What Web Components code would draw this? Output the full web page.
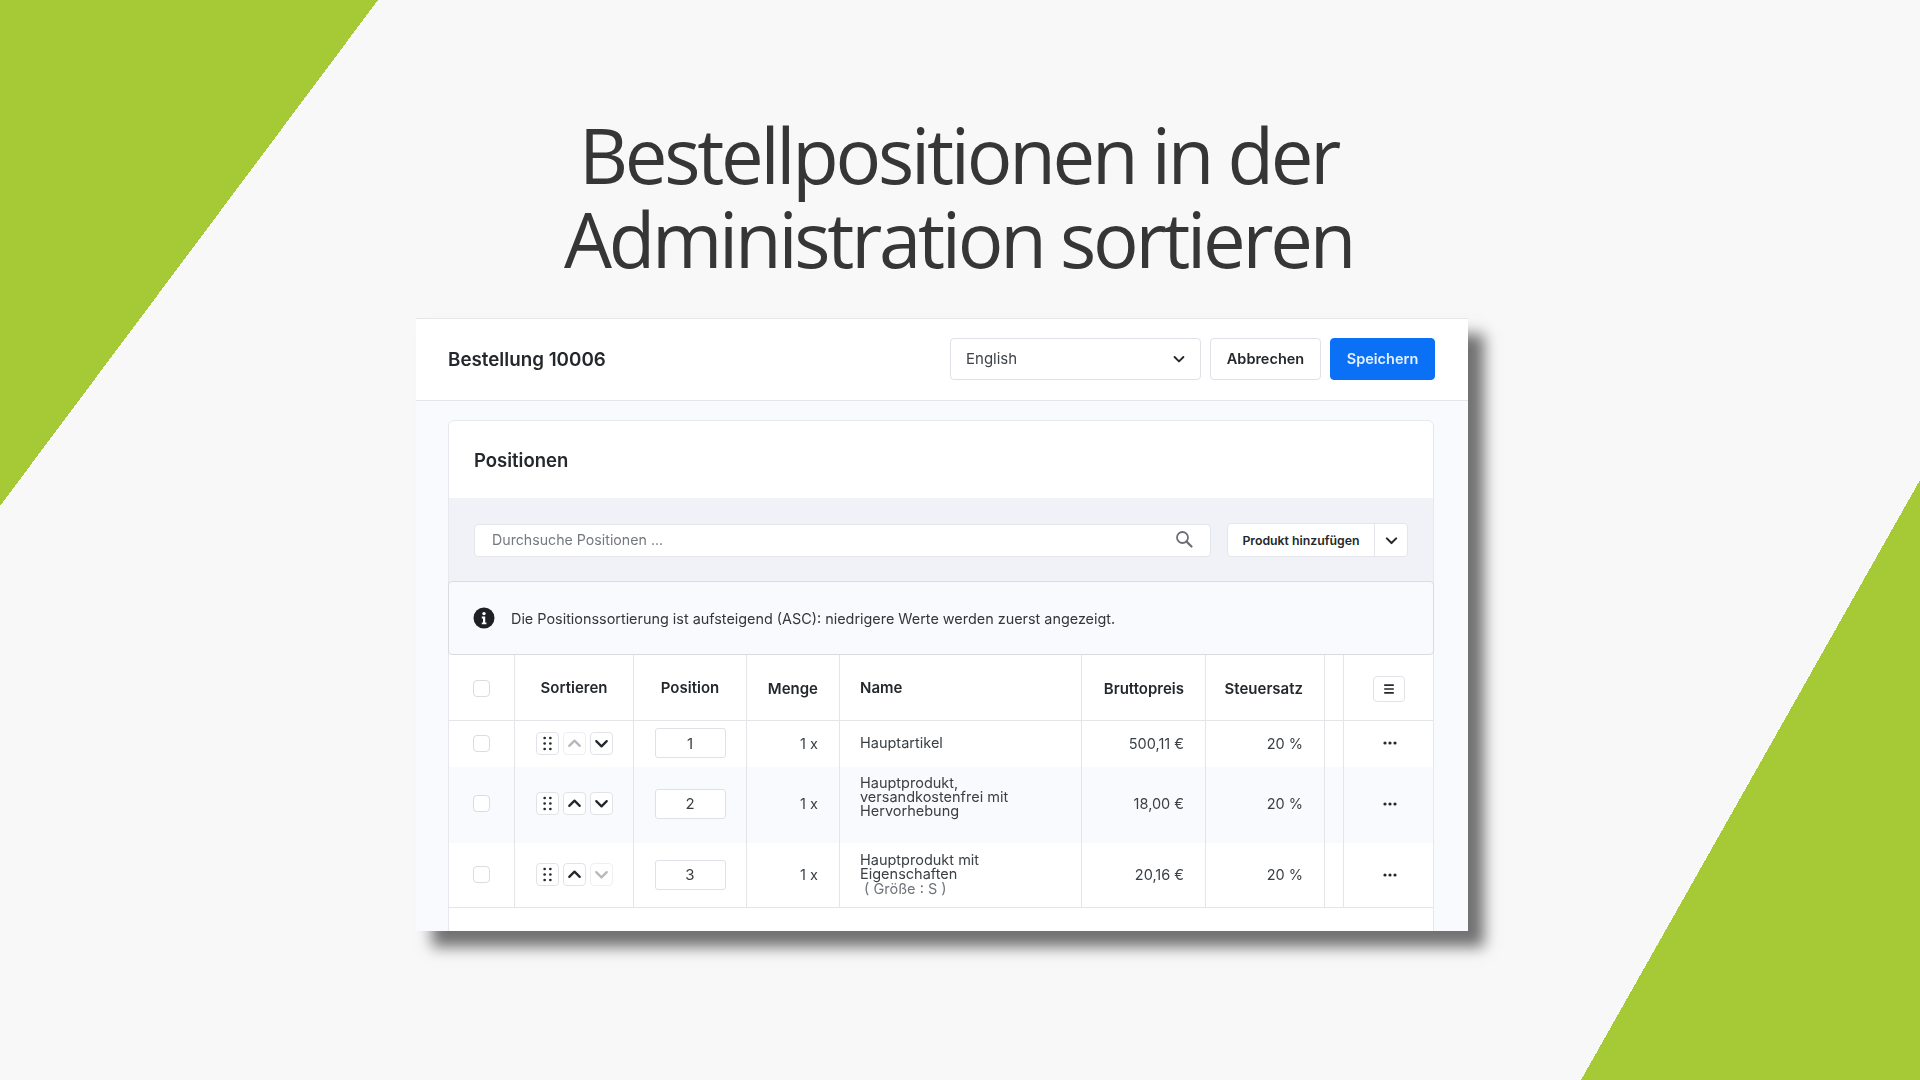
<!DOCTYPE html>
<html lang="de">
<head>
<meta charset="utf-8">
<title>Bestellpositionen sortieren</title>
<style>
  html, body { margin: 0; padding: 0; }
  body { font-family: Inter, "Liberation Sans", sans-serif; color: #2b3136; }
  line-row small { font-size: 14.5px; color: #6f747a; }
</style>
</head>
<body>
<x-slide>
  <span slot="title">Bestellpositionen in der<br>Administration sortieren</span>
  <order-panel order="Bestellung 10006">
    <line-card title="Positionen">
      <line-row head style="--pt:2px">
        <x-check></x-check>
        <span>Sortieren</span>
        <span>Position</span>
        <span class="r">Menge</span>
        <span class="l">Name</span>
        <span class="r">Bruttopreis</span>
        <span class="r">Steuersatz</span>
        <span></span>
        <x-icon-btn icon="menu" wide></x-icon-btn>
      </line-row>
      <line-row style="--h:46px;--pb:2px">
        <x-check></x-check>
        <sort-tools up-off></sort-tools>
        <x-pos>1</x-pos>
        <span class="r">1 x</span>
        <span class="l">Hauptartikel</span>
        <span class="r">500,11 €</span>
        <span class="r">20 %</span>
        <span></span>
        <x-dots></x-dots>
      </line-row>
      <line-row style="--h:76px;--pb:3px;--bg:#f9fafd">
        <x-check></x-check>
        <sort-tools></sort-tools>
        <x-pos>2</x-pos>
        <span class="r">1 x</span>
        <span class="l" style="padding-bottom:16px"><div>Hauptprodukt,<br>versandkostenfrei mit<br>Hervorhebung</div></span>
        <span class="r">18,00 €</span>
        <span class="r">20 %</span>
        <span></span>
        <x-dots></x-dots>
      </line-row>
      <line-row style="--h:64px;--pb:1px">
        <x-check></x-check>
        <sort-tools down-off></sort-tools>
        <x-pos>3</x-pos>
        <span class="r">1 x</span>
        <span class="l"><div>Hauptprodukt mit<br>Eigenschaften<br><small>&nbsp;( Größe : S )</small></div></span>
        <span class="r">20,16 €</span>
        <span class="r">20 %</span>
        <span></span>
        <x-dots></x-dots>
      </line-row>
    </line-card>
  </order-panel>
</x-slide>

<script>
const ICONS = {
  down: '<path d="M4.5 7.5l5.5 5.5 5.5-5.5" fill="none" stroke="currentColor" stroke-width="2.4" stroke-linecap="round" stroke-linejoin="round"/>',
  up: '<path d="M4.5 12.5l5.5-5.5 5.5 5.5" fill="none" stroke="currentColor" stroke-width="2.4" stroke-linecap="round" stroke-linejoin="round"/>',
  menu: '<path d="M4 5.2h12M4 10h12M4 14.8h12" fill="none" stroke="currentColor" stroke-width="2"/>',
  drag: '<g fill="currentColor"><circle cx="7" cy="4.2" r="1.4"/><circle cx="13" cy="4.2" r="1.4"/><circle cx="7" cy="10" r="1.4"/><circle cx="13" cy="10" r="1.4"/><circle cx="7" cy="15.8" r="1.4"/><circle cx="13" cy="15.8" r="1.4"/></g>'
};

class XSlide extends HTMLElement {
  constructor() {
    super();
    this.attachShadow({ mode: 'open' }).innerHTML = `
    <style>
      :host {
        display: flex; flex-direction: column; width: 1920px; height: 1080px; overflow: hidden;
        background-color: #f8f8f9;
        background-image:
          linear-gradient(to bottom right, #a6ca35 50%, transparent 50%),
          linear-gradient(to bottom right, transparent 50%, #a6ca35 50%);
        background-size: 378px 506px, 339px 600px;
        background-position: left top, right bottom;
        background-repeat: no-repeat;
      }
      h1 {
        margin: 113px 0 37px; padding-right: 3px; text-align: center; font: 400 76px/84px "Open Sans", sans-serif;
        letter-spacing: -3.25px; color: #363636;
      }
      .stage { padding-left: 416px; }
    </style>
    <h1><slot name="title"></slot></h1>
    <div class="stage"><slot></slot></div>`;
  }
}

class OrderPanel extends HTMLElement {
  constructor() {
    super();
    this.attachShadow({ mode: 'open' }).innerHTML = `
    <style>
      :host {
        display: block; width: 1052px; height: 613px; box-sizing: border-box; overflow: hidden;
        background: #f9fafd; border-top: 1px solid #e6e7e9;
        box-shadow: 16px 16px 14px rgba(0,0,0,.55);
        filter: blur(.35px);
      }
      header {
        display: flex; align-items: center; height: 79px; padding: 0 33px 2px 32px; background: #fff;
        border-bottom: 1px solid #e3e5e9;
      }
      h2 { margin: 2px auto 0 0; font: 600 18.8px Inter, sans-serif; color: #24282c; }
      .tools { display: flex; gap: 9px; }
      .body { padding: 19px 34px 0 32px; }
    </style>
    <header>
      <h2></h2>
      <div class="tools">
        <x-select>English</x-select>
        <x-button style="width:111px">Abbrechen</x-button>
        <x-button primary style="width:105px">Speichern</x-button>
      </div>
    </header>
    <div class="body"><slot></slot></div>`;
    this.shadowRoot.querySelector('h2').textContent = this.getAttribute('order');
  }
}

class XSelect extends HTMLElement {
  constructor() {
    super();
    this.attachShadow({ mode: 'open' }).innerHTML = `
    <style>
      :host {
        display: flex; align-items: center; justify-content: space-between; box-sizing: border-box;
        width: 251px; height: 42px; padding: 0 13px 0 15px; background: #fff; color: #3d4349;
        border: 1px solid #dfe1e6; border-radius: 4px; font: 400 15px Inter, sans-serif;
      }
      svg { width: 16px; height: 16px; color: #24282c; }
    </style>
    <slot></slot><svg viewBox="0 0 20 20">${ICONS.down}</svg>`;
  }
}

class XButton extends HTMLElement {
  constructor() {
    super();
    this.attachShadow({ mode: 'open' }).innerHTML = `
    <style>
      :host {
        display: flex; align-items: center; justify-content: center; box-sizing: border-box;
        height: 42px; background: #fff; color: #24282c; border: 1px solid #dfe1e6; border-radius: 4px;
        font: 600 14.5px Inter, sans-serif;
      }
      :host([primary]) { background: #0a70f5; border-color: #0a70f5; color: #e4f1ff; }
    </style>
    <slot></slot>`;
  }
}

class LineCard extends HTMLElement {
  constructor() {
    super();
    this.attachShadow({ mode: 'open' }).innerHTML = `
    <style>
      :host {
        display: block; background: #fff; border: 1px solid #e6e8ed; border-radius: 6px 6px 0 0;
        height: 520px; box-sizing: border-box;
      }
      h3 { margin: 0; height: 77px; padding-left: 25px; display: flex; align-items: center;
        font: 600 18.5px Inter, sans-serif; color: #24282c; }
      .bar { display: flex; align-items: center; height: 84px; background: #f0f2f7; padding: 0 25px; gap: 16px; box-sizing: border-box; }
      .foot { border-top: 1px solid #e3e5e9; }
    </style>
    <h3></h3>
    <div class="bar">
      <x-search>Durchsuche Positionen ...</x-search>
      <split-button>Produkt hinzufügen</split-button>
    </div>
    <x-info>Die Positionssortierung ist aufsteigend (ASC): niedrigere Werte werden zuerst angezeigt.</x-info>
    <slot></slot>
    <div class="foot"></div>`;
    this.shadowRoot.querySelector('h3').textContent = this.getAttribute('title');
    this.removeAttribute('title');
  }
}

class XSearch extends HTMLElement {
  constructor() {
    super();
    this.attachShadow({ mode: 'open' }).innerHTML = `
    <style>
      :host {
        display: flex; align-items: center; justify-content: space-between; box-sizing: border-box;
        width: 737px; height: 33px; padding: 0 17px 2px; background: #fff; color: #74797f;
        border: 1px solid #e3e5ea; border-radius: 4px; font: 400 14.2px Inter, sans-serif;
      }
      svg { width: 18px; height: 18px; color: #6c7076; }
    </style>
    <slot></slot>
    <svg viewBox="0 0 18 18"><circle cx="7.5" cy="7.5" r="5.5" fill="none" stroke="currentColor" stroke-width="1.8"/><path d="M11.6 11.6L16.5 16.5" stroke="currentColor" stroke-width="2.2" stroke-linecap="round"/></svg>`;
  }
}

class SplitButton extends HTMLElement {
  constructor() {
    super();
    this.attachShadow({ mode: 'open' }).innerHTML = `
    <style>
      :host {
        display: flex; box-sizing: border-box; width: 181px; height: 34px; background: #fff; color: #24282c;
        border: 1px solid #e3e5ea; border-radius: 4px; font: 600 12.3px Inter, sans-serif;
      }
      .label { flex: 1; display: flex; align-items: center; justify-content: center; border-right: 1px solid #e3e5ea; }
      .arrow { width: 32px; display: flex; align-items: center; justify-content: center; }
      svg { width: 17px; height: 17px; }
    </style>
    <div class="label"><slot></slot></div>
    <div class="arrow"><svg viewBox="0 0 20 20">${ICONS.down}</svg></div>`;
  }
}

class XInfo extends HTMLElement {
  constructor() {
    super();
    this.attachShadow({ mode: 'open' }).innerHTML = `
    <style>
      :host {
        display: flex; align-items: center; gap: 16px; box-sizing: border-box; height: 74px; padding-left: 24px;
        background: #f9fafd; border: 1px solid #d8dbe2; border-radius: 4px; margin: -1px -1px 0;
        font: 400 14.4px Inter, sans-serif; color: #32373c;
      }
      svg { width: 22px; height: 22px; flex: none; }
    </style>
    <svg viewBox="0 0 22 22"><circle cx="11" cy="11" r="10.5" fill="#1d2126"/><circle cx="11" cy="6.6" r="1.7" fill="#fff"/><path d="M8.8 9.6h3.4v6h1.2v1.7H8.8v-1.7H10v-4.2H8.8z" fill="#fff"/></svg>
    <slot></slot>`;
  }
}

class LineRow extends HTMLElement {
  constructor() {
    super();
    this.attachShadow({ mode: 'open' }).innerHTML = `
    <style>
      :host {
        display: grid; grid-template-columns: 65px 119px 113px 93px 242px 124px 119px 19px 90px;
        height: var(--h, 65px); background: var(--bg, #fff);
        font: 400 14.5px/14.3px Inter, sans-serif; color: #3a3f44;
      }
      :host([head]) { font-weight: 600; font-size: 15px; color: #24282c; border-bottom: 1px solid #e3e5e9; height: 65px; }
      ::slotted(*) {
        display: flex; align-items: center; justify-content: center; box-sizing: border-box;
        border-left: 1px solid #e3e5e9; min-width: 0; padding-top: var(--pt, 0); padding-bottom: var(--pb, 0);
      }
      ::slotted(:first-child) { border-left: 0; }
      ::slotted(.r) { justify-content: flex-end; padding-right: 21px; padding-top: calc(var(--pt, 0px) + 2px); }
      ::slotted(.l) { justify-content: flex-start; padding-left: 20px; }
    </style>
    <slot></slot>`;
  }
}

class XCheck extends HTMLElement {
  constructor() {
    super();
    this.attachShadow({ mode: 'open' }).innerHTML = `
    <style>
      :host { display: flex; }
      i { display: block; width: 17px; height: 17px; box-sizing: border-box; background: #fff; border: 1px solid #d9dce2; border-radius: 4px; }
    </style>
    <i></i>`;
  }
}

class XIconBtn extends HTMLElement {
  constructor() {
    super();
    this.attachShadow({ mode: 'open' }).innerHTML = `
    <style>
      :host { display: flex; }
      div {
        display: flex; align-items: center; justify-content: center; box-sizing: border-box;
        width: 23px; height: 23px; background: #fff; border: 1px solid #e1e3e8; border-radius: 4px; color: #24282c;
      }
      :host([wide]) div { width: 32px; height: 26px; }
      :host([off]) div { color: #b5b8bc; border-color: #eeeff2; }
      svg { width: 19px; height: 19px; }
      :host([wide]) svg { width: 16px; height: 16px; }
    </style>
    <div><svg viewBox="0 0 20 20">${ICONS[this.getAttribute('icon')]}</svg></div>`;
  }
}

class SortTools extends HTMLElement {
  constructor() {
    super();
    const up = this.hasAttribute('up-off') ? 'off' : '';
    const down = this.hasAttribute('down-off') ? 'off' : '';
    this.attachShadow({ mode: 'open' }).innerHTML = `
    <style>:host { display: flex; gap: 4px; }</style>
    <x-icon-btn icon="drag"></x-icon-btn>
    <x-icon-btn icon="up" ${up}></x-icon-btn>
    <x-icon-btn icon="down" ${down}></x-icon-btn>`;
  }
}

class XPos extends HTMLElement {
  constructor() {
    super();
    this.attachShadow({ mode: 'open' }).innerHTML = `
    <style>
      :host { display: flex; }
      div {
        display: flex; align-items: center; justify-content: center; box-sizing: border-box; width: 71px; height: 30px;
        padding-top: 2px; background: #fff; border: 1px solid #dfe1e6; border-radius: 3px; font-size: 15px;
      }
    </style>
    <div><slot></slot></div>`;
  }
}

class XDots extends HTMLElement {
  constructor() {
    super();
    this.attachShadow({ mode: 'open' }).innerHTML = `
    <style>:host { display: flex; } svg { width: 14px; height: 4px; color: #24282c; margin-left: 2px; }</style>
    <svg viewBox="0 0 14 4" fill="currentColor"><circle cx="2" cy="2" r="1.6"/><circle cx="7" cy="2" r="1.6"/><circle cx="12" cy="2" r="1.6"/></svg>`;
  }
}

[['x-slide', XSlide], ['order-panel', OrderPanel], ['x-select', XSelect], ['x-button', XButton],
 ['line-card', LineCard], ['x-search', XSearch], ['split-button', SplitButton], ['x-info', XInfo],
 ['line-row', LineRow], ['x-check', XCheck], ['x-icon-btn', XIconBtn], ['sort-tools', SortTools],
 ['x-pos', XPos], ['x-dots', XDots]].forEach(([name, cls]) => customElements.define(name, cls));
</script>
</body>
</html>
